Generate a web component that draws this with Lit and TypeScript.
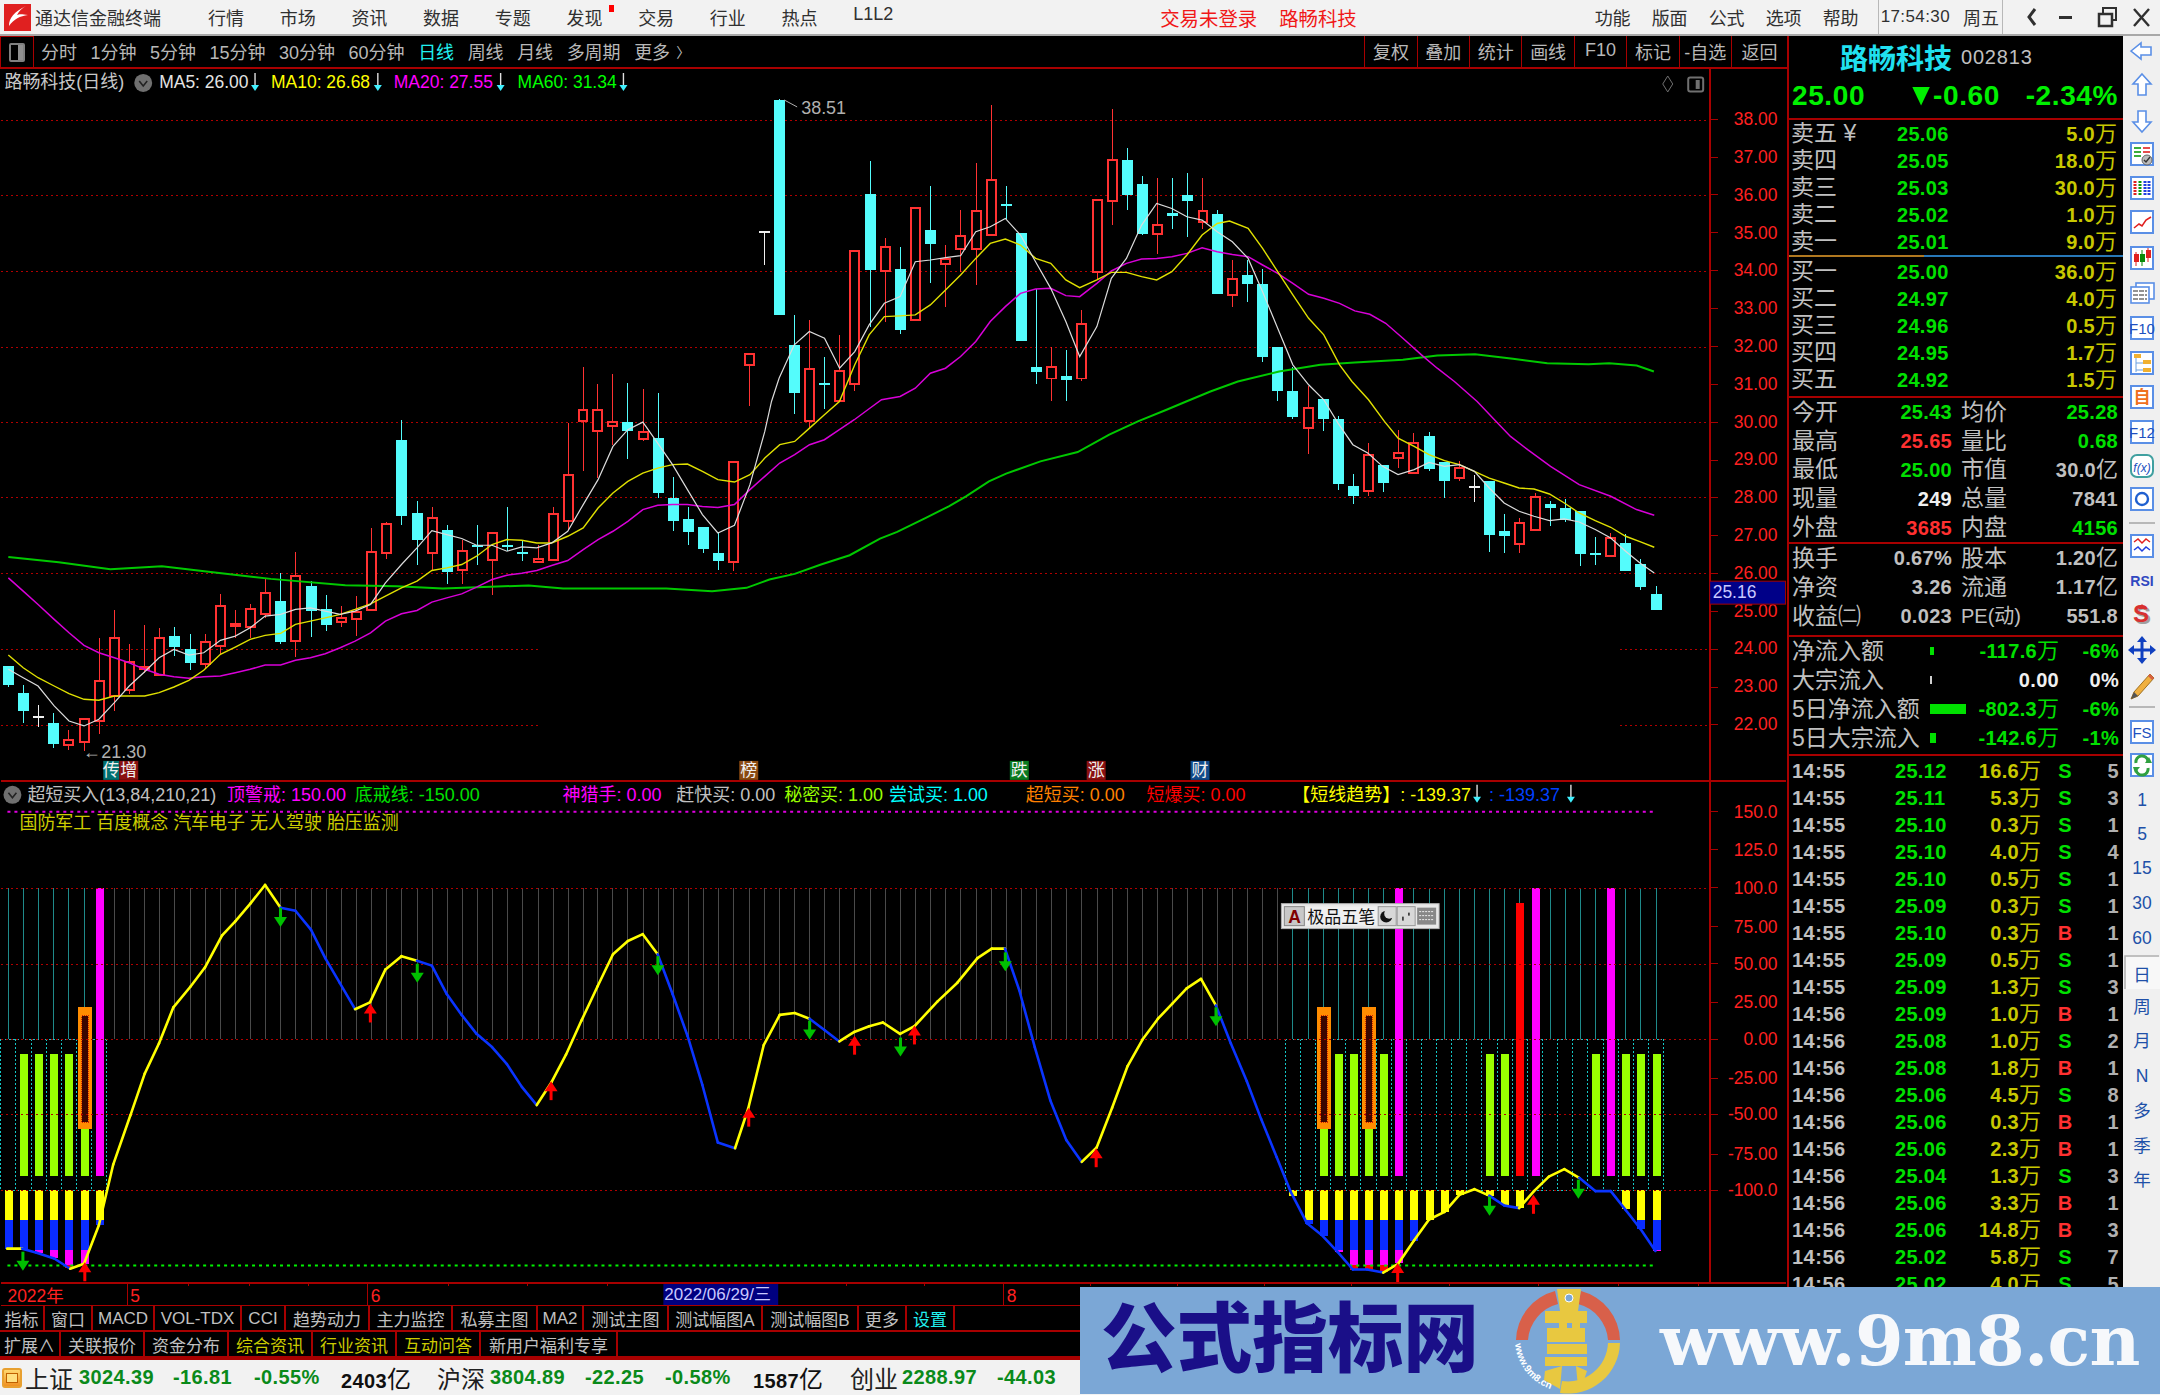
import { LitElement, html, css, svg } from "lit";
import { customElement } from "lit/decorators.js";

type P = [number, number];
const STEP = 15.135, X0 = 6.9;
const cx = (i: number) => X0 + STEP * i;
const z3 = (a: number[]): P[] => pairs(a).map(([x, y]) => [x / 1.742, 400 + y / 3]);
const z4 = (a: number[]): P[] => pairs(a).map(([x, y]) => [880 + x / 1.742, 400 + y / 3]);
const z1 = (a: number[]): P[] => pairs(a).map(([x, y]) => [x / 1.452, y / 3]);
const z2 = (a: number[]): P[] => pairs(a).map(([x, y]) => [1080 + x / 1.452, y / 3]);
const z6 = (a: number[]): P[] => pairs(a).map(([x, y]) => [x / 1.742, 800 + y / 2.635]);
const z7 = (a: number[]): P[] => pairs(a).map(([x, y]) => [880 + x / 1.742, 800 + y / 2.635]);
function pairs(a: number[]): P[] {
  const o: P[] = [];
  for (let i = 0; i < a.length; i += 2) o.push([a[i], a[i + 1]]);
  return o;
}
const pts = (l: P[]) => l.map(([x, y]) => `${x.toFixed(1)},${y.toFixed(1)}`).join(" ");

const MA5 = [
  ...z3([12,805,38,830,64,855,92,915,118,960,144,975,170,955,197,905,223,855,250,812,275,770,301,745,327,762,353,755,382,718,408,705,434,680,460,645,487,640,513,625,539,620,565,630,591,640,617,630,644,610,670,545,698,490,725,440,751,388,777,400,803,412,829,432,856,432,882,450,908,437,934,440,960,425,988,390,1015,310,1041,235,1067,135,1093,85,1119,62,1145,125,1171,190,1197,265,1223,340,1250,395,1279,372,1306,250,1332,90]),
  ...z1([1120,1200,1131,1130,1153,1030,1175,990,1197,1010,1219,1100,1241,1050,1262,970,1284,905,1307,885,1329,780,1351,775,1373,768,1395,762,1417,690,1438,675,1460,650,1482,700,1504,780,1526,860,1548,960]),
  ...z2([0,1065,25,975,46,830,68,770,90,670,112,605,134,620,156,645,178,655,200,690,222,720,245,770,266,870,288,980,310,1090,333,1150,355,1195]),
  ...z4([799,65,825,130,851,155,877,195,904,220,932,205,958,183,985,195,1011,190,1037,210,1063,260,1089,305,1115,330,1141,345,1168,358,1194,353,1220,362,1248,385,1275,410,1301,450,1327,487,1351,515]),
];
const MA10 = [
  ...z3([12,762,38,800,64,830,92,855,118,878,144,895,170,898,197,885,223,885,250,885,275,875,301,858,327,838,353,808,382,760,408,738,434,715,460,703,487,697,513,670,539,660,565,650,591,640,617,625,644,608,670,585,698,560,725,540,751,508,777,500,803,490,829,465,856,430,882,415,908,417,934,425,960,425,988,405,1015,380,1041,320,1067,275,1093,240,1119,215,1145,200,1171,190,1197,188,1223,210,1250,235,1279,242,1306,220,1332,170,1358,130,1384,120,1410,80,1436,40,1462,0]),
  ...z1([1241,1090,1262,1000,1284,945,1307,943,1329,940,1351,910,1373,865,1395,820,1417,770,1438,725,1460,712,1482,730,1504,770,1526,785,1548,835]),
  ...z2([0,858,25,835,46,812,68,812,90,825,112,835,134,810,156,760,178,700,200,665,218,658,245,680,266,740,288,810,310,880,333,950,355,1000,378,1090,396,1140,420,1195]),
  ...z4([880,60,904,110,932,135,958,160,985,178,1011,190,1037,210,1063,230,1089,245,1115,260,1141,263,1168,278,1194,305,1220,335,1248,358,1275,378,1301,405,1327,422,1351,438]),
];
const MA20 = [
  ...z3([12,530,38,570,64,610,92,655,118,695,144,733,170,755,197,770,223,785,250,805,275,820,301,827,327,832,353,827,382,825,408,815,434,805,460,792,487,792,513,778,539,770,565,758,591,740,617,720,644,695,670,660,698,638,725,628,751,603,777,590,803,578,829,558,856,535,882,522,908,516,934,508,960,493,988,478,1015,445,1041,415,1067,390,1093,360,1119,325,1145,312,1171,310,1197,310,1223,316,1250,319,1279,310,1306,265,1332,225,1358,185,1384,160,1410,130,1436,115,1462,85,1488,55,1514,22]),
  ...z1([1280,1195,1307,1185,1329,1160,1351,1115,1373,1100,1395,1065,1417,1020,1438,960,1460,915,1482,875,1504,862,1526,860,1548,882]),
  ...z2([0,885,25,845,46,808,68,785,90,772,112,770,134,765,156,755,178,738,200,750,222,758,245,765,266,790,288,815,310,845,333,878,355,890,378,905,400,928,422,938,445,965,470,1010,497,1060,520,1100,545,1140,578,1200]),
  ...z4([1075,60,1100,105,1130,145,1170,195,1220,250,1275,285,1320,325,1351,342]),
];
const MA60 = [
  ...z3([12,467,100,483,190,504,280,495,380,515,470,533,600,552,690,555,770,562,830,558,920,553,980,562,1160,562,1240,570,1300,560,1340,535,1384,518,1430,490,1480,462]),
  ...z4([0,412,30,392,80,350,120,315,150,285,190,240,220,217,280,180,345,152,400,100,450,60,500,25]),
  ...z2([155,1200,190,1170,230,1140,290,1110,350,1090,400,1083,470,1075,520,1062,575,1058,630,1072,680,1085,740,1088,770,1085,810,1092,835,1110]),
];

type C = [string, number, number, number, number];
const zc = (l: [string, number, number, number, number][]): C[] =>
  l.map(([t, a, b, h, lo]) => [t, 400 + a / 3, 400 + b / 3, 400 + h / 3, 400 + lo / 3]);
const CANDLES: C[] = [
  ...zc([
    ["c",795,853,795,858],["c",875,930,852,965],["w",948,948,912,978],["c",965,1028,935,1042],["r",1016,1031,988,1047],
    ["r",953,1022,953,1050],["r",840,960,710,1000],["r",710,885,628,930],["r",782,866,730,880],["r",797,805,672,815],
    ["r",710,822,682,822],["c",704,737,678,765],["c",745,785,700,808],["r",724,788,700,805],["r",615,735,578,760],
    ["r",670,675,628,710],["r",624,678,610,710],["r",575,640,533,650],["c",601,722,515,728],["r",525,720,452,767],
    ["c",556,630,540,708],["c",624,672,582,690],["r",650,662,615,678],["r",632,653,586,705],["r",453,626,380,630],
    ["r",367,455,362,473],["c",115,343,57,370],["c",335,415,300,490],["r",350,455,318,510],["c",385,513,370,547],
    ["r",450,505,415,547],["x",435,435,370,490],["r",395,477,395,582],["c",430,438,318,450],["x",455,455,415,480],
    ["r",472,482,430,484],["r",337,477,318,477],["r",220,358,65,385],["r",26,60,-105,208],["r",26,90,-51,230],
    ["r",62,75,-84,130],["c",62,90,-54,172],["r",93,112,-36,120],["c",110,275,-24,290],["c",290,360,228,388],
    ["c",353,393,318,430],["c",376,443,376,456],["c",456,478,392,505],["r",183,482,183,510],
  ]),
  ["r",352,363,352,405],["w",230,230,230,263],["c",98,313,97,313],["c",343,392,313,413],["r",367,420,318,428],
  ["x",383,383,355,408],["r",369,400,333,401],["r",249,383,249,390],["c",192,268,159,325],["r",245,269,236,320],
  ["c",267,328,245,332],["r",206,318,206,318],["c",228,242,184,281],["r",257,262,243,305],["r",234,247,208,270],
  ["r",209,247,161,283],["r",178,233,103,233],["x",203,203,184,217],["c",231,339,231,339],["c",365,370,287,383],
  ["r",365,377,345,400],["c",374,379,348,400],["r",322,377,308,380],["r",198,270,198,277],["r",158,199,107,223],
  ["c",158,193,146,208],["c",182,232,174,233],["r",223,232,176,252],["c",211,214,176,227],["c",193,199,171,235],
  ["r",209,220,176,227],["c",212,292,208,292],["r",277,293,258,305],["c",273,282,258,300],["c",282,355,267,360],
  ["c",345,390,345,400],["c",390,416,365,418],["r",407,427,385,453],["c",398,418,398,430],["c",418,483,415,489],
  ["c",485,495,473,503],["r",454,490,442,495],["c",464,482,464,491],["r",452,457,429,467],["r",442,472,432,472],
  ["c",435,468,431,470],["c",461,480,461,497],["r",467,477,460,480],["w",486,486,474,501],["c",480,534,480,551],
  ["c",530,535,513,552],["r",522,543,517,552],["r",496,529,492,529],["c",503,507,500,525],["c",507,519,498,521],
  ["c",510,553,510,565],["x",553,553,536,564],["r",537,555,532,556],["c",542,570,533,570],["c",563,586,558,589],
  ["c",593,609,585,609],
];

const pY = (p: number) => 117.7 + (38 - p) * 37.87;

const curve: P[] = [
  ...z6([10,1182,36,1182,60,1192,92,1208,120,1235,144,1222,170,1120,195,960,225,830,250,720,275,640,300,545,330,490,355,440,385,355,408,318,435,270,460,222,487,282,513,290,540,340,565,415,590,480,617,550,643,532,670,445,698,410,725,422,751,435,777,510,803,565,829,615,856,650,882,695,908,755,934,803,960,742,985,670,1012,580,1040,490,1067,405,1093,370,1119,352,1145,405,1171,510,1197,620,1223,750,1250,902,1280,917,1303,812,1330,645,1358,565,1384,560,1410,575,1436,605,1462,635,1488,610,1514,595]),
  ...z7([5,585,35,615,60,595,100,530,135,480,170,415,195,390,218,390,243,500,270,650,297,790,325,895,352,953,378,915,405,810,432,700,458,630,485,575,510,535,535,495,560,470,586,540,612,640,640,740,665,840,692,940,716,1030,745,1115,770,1145,798,1190,825,1237,850,1237,878,1245,904,1222,932,1160,958,1105,985,1085,1011,1040,1037,1025,1063,1042,1089,1068,1115,1075,1141,1030,1167,992,1194,972,1220,995,1248,1030,1275,1030,1301,1080,1327,1130,1353,1188]),
];
const BLUE: P[] = [[20.7,68.9],[279.6,354.2],[416,536.2],[657.3,734.8],[809.4,839.3],[1005.1,1082],[1216.4,1384],[1490.2,1520],[1580.3,1656.7]];
const isBlue = (x: number) => BLUE.some(([a, b]) => x >= a && x <= b);
const curveAt = (x: number) => {
  for (let i = 0; i < curve.length - 1; i++) {
    const [a, ay] = curve[i], [b, by] = curve[i + 1];
    if (x >= a && x <= b) return ay + ((x - a) / (b - a)) * (by - ay);
  }
  return x < curve[0][0] ? curve[0][1] : curve[curve.length - 1][1];
};

const MAGENTA = [6, 92, 101, 106];
const ORANGE = [5, 87, 90];
const GREEN = [1, 2, 3, 4, 5, 87, 88, 89, 90, 91, 98, 99, 105, 107, 108, 109];
const ACTIVE = (i: number) => i <= 6 || i >= 85;

const ARROWS: [number, number, number, string][] = [
  ...z6([36,1190,486,283,724,430,1145,410,1409,580]).map(([x, y]) => [x, y, y + 18, "d"] as [number, number, number, string]),
  ...z7([35,625,218,400,586,545,1062,1045,1218,1000]).map(([x, y]) => [x, y, y + 18, "d"] as [number, number, number, string]),
  ...z6([144,1268,643,585,958,790,1303,860,1487,670]).map(([x, y]) => [x, y - 18, y, "u"] as [number, number, number, string]),
  ...z7([60,643,377,967,903,1270,1139,1090]).map(([x, y]) => [x, y - 18, y, "u"] as [number, number, number, string]),
];

const PRICE_LABELS = [38,37,36,35,34,33,32,31,30,29,28,27,26,25,24,23,22];
const LOW_LABELS: [string, number][] = [["150.0",811],["125.0",849],["100.0",887],["75.00",926],["50.00",963],["25.00",1002],["0.00",1039],["-25.00",1078],["-50.00",1114],["-75.00",1154],["-100.0",1190]];
const LEGEND: [string, number, string][] = [["MA5: 26.00",158,"#e4e4e4"],["MA10: 26.68",270,"#ffff00"],["MA20: 27.55",393,"#ff00ff"],["MA60: 31.34",517,"#00ff00"]];
const LEGEND_ARROWS = [254, 377, 500, 623];
const IND: [string, number, string][] = [
  ["超短买入(13,84,210,21)",26,"#c0c0c0"],["顶警戒: 150.00",226,"#ff00ff"],["底戒线: -150.00",354,"#00e000"],
  ["神猎手: 0.00",562,"#ff00ff"],["赶快买: 0.00",676,"#c0c0c0"],["秘密买: 1.00",784,"#99ff00"],["尝试买: 1.00",889,"#00ffff"],
  ["超短买: 0.00",1026,"#ff8000"],["短爆买: 0.00",1147,"#ff0000"],["【短线趋势】: -139.37",1293,"#ffff00"],[": -139.37",1490,"#0040ff"],
];
const BADGES: [string, number, number, string][] = [["传",102,16,"#007070"],["增",118,19,"#8a1010"],["榜",739,19,"#8a4a10"],["跌",1010,19,"#0a7a20"],["涨",1087,19,"#8a1010"],["财",1191,19,"#104a8a"]];
const MINOR_TICKS = [187,248,308,448,527,607,846,925,1091,1178,1265,1352,1450,1540,1620,1700];
const MONTH: [string, number][] = [["5",126],["6",367],["8",1004]];

const MENU = ["行情","市场","资讯","数据","专题","发现","交易","行业","热点","L1L2"];
const MENU_R = ["功能","版面","公式","选项","帮助"];
const PERIODS = ["分时","1分钟","5分钟","15分钟","30分钟","60分钟","日线","周线","月线","多周期","更多"];
const TOOLS = ["复权","叠加","统计","画线","F10","标记","-自选","返回"];
const TABS1: [string, number, string?][] = [["指标",45],["窗口",48],["MACD",62],["VOL-TDX",87],["CCI",44],["趋势动力",84],["主力监控",83],["私募主图",85],["MA2",46],["测试主图",85],["测试幅图A",94],["测试幅图B",96],["更多",48],["设置",48,"cy"]];
const TABS2: [string, number, string?][] = [["扩展∧",61],["关联报价",84],["资金分布",84],["综合资讯",84,"ye"],["行业资讯",84,"ye"],["互动问答",84,"ye"],["新用户福利专享",137]];
const SELL = [["卖五 ¥","25.06","5.0"],["卖四","25.05","18.0"],["卖三","25.03","30.0"],["卖二","25.02","1.0"],["卖一","25.01","9.0"]];
const BUY = [["买一","25.00","36.0"],["买二","24.97","4.0"],["买三","24.96","0.5"],["买四","24.95","1.7"],["买五","24.92","1.5"]];
const STATS: [string, string, string, string, string, string, string?][] = [
  ["今开","25.43","gr","均价","25.28","gr"],["最高","25.65","rd","量比","0.68","gr"],["最低","25.00","gr","市值","30.0","wh","亿"],
  ["现量","249","wt","总量","7841","wh"],["外盘","3685","rd","内盘","4156","gr"],
];
const STATS2: [string, string, string, string?][] = [["换手","0.67%","股本","1.20"],["净资","3.26","流通","1.17"],["收益㈡","0.023","PE(动)","551.8"]];
const FLOW: [string, number, number, string, string, string, string][] = [
  ["净流入额",4,8,"-117.6","万","-6%","gr"],["大宗流入",2,8,"0.00","","0%","wt"],["5日净流入额",36,10,"-802.3","万","-6%","gr"],["5日大宗流入",6,10,"-142.6","万","-1%","gr"],
];
const TICKS: [string, string, string, string, string][] = ([
  "14:55 25.12 16.6 S 5","14:55 25.11 5.3 S 3","14:55 25.10 0.3 S 1","14:55 25.10 4.0 S 4","14:55 25.10 0.5 S 1",
  "14:55 25.09 0.3 S 1","14:55 25.10 0.3 B 1","14:55 25.09 0.5 S 1","14:55 25.09 1.3 S 3","14:56 25.09 1.0 B 1",
  "14:56 25.08 1.0 S 2","14:56 25.08 1.8 B 1","14:56 25.06 4.5 S 8","14:56 25.06 0.3 B 1","14:56 25.06 2.3 B 1",
  "14:56 25.04 1.3 S 3","14:56 25.06 3.3 B 1","14:56 25.06 14.8 B 3","14:56 25.02 5.8 S 7","14:56 25.02 4.0 S 5",
].map((s) => s.split(" ") as any));
const STATUS: [string, number, string][] = [
  ["上证",54,"nm"],["3024.39",94,"g"],["-16.81",81,"g"],["-0.55%",87,"g"],["2403|亿",96,"k"],["沪深",53,"nm"],["3804.89",95,"g"],["-22.25",80,"g"],["-0.58%",88,"g"],["1587|亿",97,"k"],["创业",52,"nm"],["2288.97",95,"g"],["-44.03",80,"g"],
];

const downArrow = (x: number, y: number) => svg`
  <line x1=${x} x2=${x} y1=${y - 9} y2=${y + 4} stroke="#e0e0e0" stroke-width="1.4"></line>
  <polygon points="${x - 4},${y + 3} ${x + 4},${y + 3} ${x},${y + 9}" fill="#40f0ff"></polygon>`;

function candlesSvg() {
  return CANDLES.map(([t, top, bot, hi, lo], i) => {
    const x = Math.round(cx(i));
    const col = t === "r" ? "#ff3232" : t === "w" ? "#f0f0f0" : "#54fcfc";
    if (t === "x" || t === "w") {
      return svg`<line x1=${x + 0.5} x2=${x + 0.5} y1=${hi} y2=${lo} stroke=${col}></line>
        <rect x=${x - 5} y=${top - 1} width="11" height="2" fill=${col}></rect>`;
    }
    if (t === "r") {
      return svg`<line x1=${x + 0.5} x2=${x + 0.5} y1=${hi} y2=${top} stroke=${col}></line>
        <line x1=${x + 0.5} x2=${x + 0.5} y1=${bot} y2=${lo} stroke=${col}></line>
        <rect x=${x - 4} y=${top} width="9" height=${Math.max(bot - top, 1)} fill="#000" stroke=${col} stroke-width="2"></rect>`;
    }
    return svg`<line x1=${x + 0.5} x2=${x + 0.5} y1=${hi} y2=${lo} stroke=${col}></line>
      <rect x=${x - 5} y=${top} width="11" height=${Math.max(bot - top, 2)} fill=${col}></rect>`;
  });
}

function lowerSvg() {
  const n = CANDLES.length;
  const out: unknown[] = [];
  for (let i = 0; i < n; i++) {
    const x = Math.round(cx(i)) + 0.5;
    out.push(svg`<line x1=${x} x2=${x} y1="887" y2="1039" stroke=${ACTIVE(i) ? "#1f8a8a" : "#4a4a4a"}></line>`);
  }
  const spans: [number, number][] = [[-1, 6], [84, 109]];
  for (const [a, b] of spans) {
    const xa = cx(a) + 7.5, xb = cx(b) + 7.5;
    for (let i = a; i <= b; i++) {
      const x = Math.round(cx(i) + 7.5) + 0.5;
      out.push(svg`<line x1=${x} x2=${x} y1="1039" y2="1190" stroke="#14c8c8" stroke-dasharray="2 2"></line>`);
    }
    for (const y of [1039.5, 1190.5]) out.push(svg`<line x1=${xa} x2=${xb} y1=${y} y2=${y} stroke="#14c8c8" stroke-dasharray="2 2"></line>`);
  }
  for (let i = 0; i < n; i++) {
    const x = Math.round(cx(i));
    const y = curveAt(cx(i));
    if (y <= 1191) continue;
    const bands: [number, number, string][] = [[1190, 1220, "#ffff00"], [1220, 1250, "#0a2cff"], [1250, 1265, "#ff00ff"], [1265, 1290, "#ff0000"]];
    for (const [a, b, c] of bands) {
      if (y > a) out.push(svg`<rect x=${x - 3} y=${a} width="8" height=${Math.min(y, b) - a} fill=${c}></rect>`);
    }
  }
  for (const i of GREEN) {
    out.push(svg`<rect x=${Math.round(cx(i)) - 3} y="1054" width="8" height="122" fill="#99ff00"></rect>`);
  }
  for (const i of MAGENTA) {
    out.push(svg`<rect x=${Math.round(cx(i)) - 3} y="887" width="8" height="289" fill="#ff00ff"></rect>`);
  }
  out.push(svg`<rect x=${Math.round(cx(100)) - 3} y="902" width="8" height="274" fill="#ff0000"></rect>`);
  for (const i of ORANGE) {
    const x = Math.round(cx(i));
    out.push(svg`<rect x=${x - 6} y="1007" width="14" height="122" fill="#ff8c00"></rect>
      <rect x=${x - 2} y="1016" width="6" height="106" fill="#3a0500"></rect>
      <rect x=${x - 2.5} y="1015.5" width="7" height="107" fill="none" stroke="#d02000" stroke-dasharray="1 1"></rect>`);
  }
  return out;
}

function curveSvg() {
  const out: unknown[] = [];
  for (let i = 0; i < curve.length - 1; i++) {
    const [a, ay] = curve[i], [b, by] = curve[i + 1];
    const blue = isBlue((a + b) / 2);
    out.push(svg`<line x1=${a} y1=${ay} x2=${b} y2=${by} stroke=${blue ? "#0a34ff" : "#ffff00"} stroke-width="2.6" stroke-linecap="round"></line>`);
  }
  for (const [x, y1, y2, d] of ARROWS) {
    const col = d === "d" ? "#00c000" : "#ff0000";
    const rx = Math.round(x);
    if (d === "d") {
      out.push(svg`<rect x=${rx - 1} y=${y1} width="3" height=${y2 - y1 - 6} fill=${col}></rect>
        <polygon points="${rx - 6},${y2 - 9} ${rx + 7},${y2 - 9} ${rx + 0.5},${y2 + 1}" fill=${col}></polygon>`);
    } else {
      out.push(svg`<rect x=${rx - 1} y=${y1 + 6} width="3" height=${y2 - y1 - 6} fill=${col}></rect>
        <polygon points="${rx - 6},${y1 + 9} ${rx + 7},${y1 + 9} ${rx + 0.5},${y1 - 1}" fill=${col}></polygon>`);
    }
  }
  return out;
}

function chartSvg() {
  const gridFull = [38, 36, 34, 32, 30, 28, 26];
  const lowGrid = [887, 962.5, 1039, 1114, 1190];
  return svg`
  <svg class="chart" viewBox="0 67 1787 1239" width="1787" height="1239">
    <g shape-rendering="crispEdges">
      ${gridFull.map((p) => svg`<line x1="0" x2="1711" y1=${Math.round(pY(p)) + 0.5} y2=${Math.round(pY(p)) + 0.5} stroke="#b00000" stroke-dasharray="2 3"></line>`)}
      ${[24, 22].map((p) => svg`
        <line x1="0" x2="538" y1=${Math.round(pY(p)) + 0.5} y2=${Math.round(pY(p)) + 0.5} stroke="#b00000" stroke-dasharray="2 3"></line>
        <line x1="1621" x2="1711" y1=${Math.round(pY(p)) + 0.5} y2=${Math.round(pY(p)) + 0.5} stroke="#b00000" stroke-dasharray="2 3"></line>`)}
      ${candlesSvg()}
    </g>
    <polyline points=${pts(MA60)} fill="none" stroke="#00c800" stroke-width="2"></polyline>
    <polyline points=${pts(MA20)} fill="none" stroke="#d800d8" stroke-width="1.5"></polyline>
    <polyline points=${pts(MA10)} fill="none" stroke="#e0e000" stroke-width="1.4"></polyline>
    <polyline points=${pts(MA5)} fill="none" stroke="#dcdcdc" stroke-width="1.2"></polyline>

    <text class="t s18" x="3" y="86" fill="#c8c8c8">路畅科技(日线)</text>
    <circle cx="142" cy="81" r="9" fill="#707070"></circle>
    <polyline points="138,79 142,84 146,79" fill="none" stroke="#222" stroke-width="1.6"></polyline>
    ${LEGEND.map(([s, x, c]) => svg`<text class="t s175" x=${x} y="86" fill=${c}>${s}</text>`)}
    ${LEGEND_ARROWS.map((x) => downArrow(x, 80))}
    <polygon points="1669,74 1674,82 1669,90 1664,82" fill="none" stroke="#707070"></polygon>
    <rect x="1689.5" y="75.5" width="15" height="14" rx="2" fill="none" stroke="#707070" stroke-width="2"></rect>
    <rect x="1697" y="78" width="4" height="9" fill="#707070"></rect>

    <text class="t s18" x="801" y="112" fill="#b0b0b0">38.51</text>
    <polyline points="784,98 797,105" stroke="#b0b0b0" fill="none"></polyline>
    <text class="t s18" x="82" y="757" fill="#b0b0b0">←21.30</text>
    ${BADGES.map(([s, x, w, c]) => svg`
      <rect x=${x} y="760" width=${w} height="19" fill=${c}></rect>
      <text class="t s17" x=${x + w / 2} y="775" text-anchor="middle" fill="#f0f0f0">${s}</text>`)}

    <g shape-rendering="crispEdges">
      <line x1="0" x2="1787" y1="780" y2="780" stroke="#a80000" stroke-width="2"></line>
      <line x1="1711" x2="1711" y1="67" y2="1282" stroke="#a80000" stroke-width="2"></line>
      ${PRICE_LABELS.map((p) => svg`<line x1="1711" x2="1719" y1=${Math.round(pY(p))} y2=${Math.round(pY(p))} stroke="#a80000"></line>`)}
    </g>
    ${PRICE_LABELS.map((p) => svg`<text class="t s175 ax" x="1779" y=${pY(p) + 5.5} text-anchor="end">${p}.00</text>`)}
    <rect x="1711" y="580" width="76" height="23" fill="#000088" stroke="#a80000"></rect>
    <text class="t s175" x="1714" y="597" fill="#c8c8ff">25.16</text>

    <circle cx="11" cy="794" r="9" fill="#707070"></circle>
    <polyline points="7,792 11,797 15,792" fill="none" stroke="#222" stroke-width="1.6"></polyline>
    ${IND.map(([s, x, c]) => svg`<text class="t s18" x=${x} y="800" fill=${c}>${s}</text>`)}
    ${[1478, 1572].map((x) => downArrow(x, 793))}
    <text class="t s18" x="18" y="828" fill="#cccc00">国防军工 百度概念 汽车电子 无人驾驶 胎压监测</text>
    <line x1="6" x2="1658" y1="811" y2="811" stroke="#e000e0" stroke-width="2" stroke-dasharray="3 4"></line>

    <g shape-rendering="crispEdges">${lowerSvg()}</g>
    ${lowGrid.map((y) => svg`<line x1="0" x2="1711" y1=${Math.round(y) + 0.5} y2=${Math.round(y) + 0.5} stroke="#b00000" stroke-dasharray="2 3" shape-rendering="crispEdges"></line>`)}
    <line x1="6" x2="1656" y1="1265.5" y2="1265.5" stroke="#00f000" stroke-width="2" stroke-dasharray="3 4"></line>
    ${curveSvg()}

    <g shape-rendering="crispEdges">
      ${LOW_LABELS.map(([, y]) => svg`<line x1="1711" x2="1719" y1=${y} y2=${y} stroke="#a80000"></line>`)}
    </g>
    ${LOW_LABELS.map(([s, y]) => svg`<text class="t s175 ax" x="1779" y=${y + 6} text-anchor="end">${s}</text>`)}

    <g shape-rendering="crispEdges">
      <line x1="0" x2="1787" y1="1282.5" y2="1282.5" stroke="#a80000" stroke-width="2"></line>
      ${MINOR_TICKS.map((x) => svg`<line x1=${x} x2=${x} y1="1282" y2="1286" stroke="#a80000"></line>`)}
      ${MONTH.map(([, x]) => svg`<line x1=${x} x2=${x} y1="1282" y2="1306" stroke="#a80000"></line>`)}
      <line x1="0" x2="1787" y1="1305" y2="1305" stroke="#a80000"></line>
    </g>
    <text class="t s175" x="6" y="1302" fill="#ff2020">2022年</text>
    ${MONTH.map(([s, x]) => svg`<text class="t s175" x=${x + 3} y="1302" fill="#ff2020">${s}</text>`)}
    <rect x="663" y="1284" width="115" height="21" fill="#000080"></rect>
    <text class="t s17" x="664" y="1300" fill="#c8c8ff">2022/06/29/三</text>

    <g>
      <rect x="1282" y="903" width="158" height="25" fill="#e8e8e8" stroke="#b0b0b0"></rect>
      <rect x="1285" y="906" width="20" height="19" fill="#c8c8c8" stroke="#888"></rect>
      <text class="t s175" x="1289" y="922" fill="#800000" font-weight="bold">A</text>
      <rect x="1306" y="906" width="72" height="19" fill="#f0f0f0"></rect>
      <text class="t s17" x="1308" y="922" fill="#101010">极品五笔</text>
      <rect x="1379" y="906" width="18" height="19" fill="#d8d8d8" stroke="#999"></rect>
      <circle cx="1387" cy="916" r="6" fill="#111"></circle>
      <circle cx="1390" cy="913" r="5" fill="#d8d8d8"></circle>
      <rect x="1398" y="906" width="18" height="19" fill="#d8d8d8" stroke="#999"></rect>
      <rect x="1403" y="916" width="1.5" height="4" fill="#222"></rect>
      <rect x="1409" y="912" width="1.5" height="3" fill="#222"></rect>
      <rect x="1418" y="907" width="19" height="17" fill="#888"></rect>
      <line x1="1420" x2="1435" y1="911" y2="911" stroke="#eee" stroke-dasharray="2 1"></line>
      <line x1="1420" x2="1435" y1="915" y2="915" stroke="#eee" stroke-dasharray="2 1"></line>
      <line x1="1420" x2="1435" y1="919" y2="919" stroke="#eee" stroke-dasharray="2 1"></line>
    </g>
  </svg>`;
}

function iconsSvg() {
  const FR = "#5a8fe6";
  const frame = (y: number) => svg`<rect x="2131" y=${y - 11} width="22" height="22" fill="#fff" stroke=${FR} stroke-width="2"></rect>`;
  const txt = (y: number, s: string, fill: string, cls = "ic") => svg`<text class="t ${cls}" x="2142" y=${y + 6} text-anchor="middle" fill=${fill}>${s}</text>`;
  const sep = (y: number) => svg`<line x1="2129" x2="2155" y1=${y} y2=${y} stroke="#b8b8b8" stroke-width="2"></line>`;
  return svg`
  <svg class="side" viewBox="2123 36 37 1322" width="37" height="1322">
    <polygon points="2131,51 2141,43 2141,47 2151,47 2151,55 2141,55 2141,59" fill="#fff" stroke=${FR} stroke-width="1.6"></polygon>
    <polygon points="2142,74 2151,84 2146,84 2146,95 2138,95 2138,84 2133,84" fill="#fff" stroke=${FR} stroke-width="1.6"></polygon>
    <polygon points="2142,132 2151,122 2146,122 2146,111 2138,111 2138,122 2133,122" fill="#fff" stroke=${FR} stroke-width="1.6"></polygon>
    ${frame(154)}
    <g stroke-width="1.6">
      <line x1="2134" x2="2141" y1="148" y2="148" stroke="#0a9a0a"></line><line x1="2134" x2="2141" y1="152" y2="152" stroke="#0a9a0a"></line><line x1="2134" x2="2141" y1="156" y2="156" stroke="#0a9a0a"></line>
      <line x1="2143" x2="2150" y1="148" y2="148" stroke="#e02020"></line><line x1="2143" x2="2150" y1="152" y2="152" stroke="#e02020"></line>
    </g>
    <circle cx="2147" cy="160" r="5" fill="#bbb" stroke="#666"></circle><polyline points="2144,160 2146,162 2150,157" fill="none" stroke="#333" stroke-width="1.4"></polyline>
    ${frame(188)}
    ${[[2135,"#e02020"],[2140,"#0a9a0a"],[2145,"#2040e0"],[2149,"#2040e0"]].map(([x, c]) => svg`<line x1=${x} x2=${x} y1="181" y2="196" stroke=${c} stroke-width="3" stroke-dasharray="2 1"></line>`)}
    ${frame(222)}
    <polyline points="2134,228 2139,224 2142,226 2146,220 2151,217" fill="none" stroke="#e02020" stroke-width="1.6"></polyline>
    ${frame(258)}
    <line x1="2136" x2="2136" y1="252" y2="266" stroke="#e02020"></line><rect x="2134" y="254" width="5" height="8" fill="#e02020"></rect>
    <line x1="2142" x2="2142" y1="250" y2="266" stroke="#0a8a0a"></line><rect x="2140" y="254" width="5" height="8" fill="#0a8a0a"></rect>
    <line x1="2148" x2="2148" y1="248" y2="262" stroke="#e02020"></line><rect x="2146" y="250" width="5" height="8" fill="#e02020"></rect>
    <rect x="2136" y="283" width="18" height="16" fill="#fff" stroke=${FR} stroke-width="1.6"></rect>
    <rect x="2131" y="287" width="18" height="16" fill="#fff" stroke=${FR} stroke-width="1.6"></rect>
    <g stroke="#707070" stroke-width="1.6" stroke-dasharray="5 1"><line x1="2133" x2="2147" y1="291" y2="291"></line><line x1="2133" x2="2147" y1="295" y2="295"></line><line x1="2133" x2="2147" y1="299" y2="299"></line></g>
    ${frame(328)} ${txt(328, "F10", "#2050c0", "ic2")}
    ${frame(363)}
    <path d="M2136 358 V372 M2136 363 H2143 M2136 370 H2143" stroke="#6aa0e0" fill="none"></path>
    <rect x="2134" y="354" width="7" height="4" fill="#f0b030"></rect><rect x="2143" y="360" width="8" height="4" fill="#f0b030"></rect><rect x="2143" y="368" width="8" height="4" fill="#f0b030"></rect>
    ${frame(397)} ${txt(397, "自", "#f07020", "ic")}
    ${frame(432)} ${txt(432, "F12", "#2050c0", "ic2")}
    <rect x="2131" y="455" width="22" height="22" rx="6" fill="#fff" stroke="#40a0a0" stroke-width="2"></rect> ${txt(466, "f(x)", "#2050c0", "ic3")}
    ${frame(499)} <circle cx="2142" cy="499" r="6" fill="none" stroke="#2060d0" stroke-width="2.4"></circle>
    ${sep(523)}
    ${frame(546)}
    <polyline points="2134,542 2138,539 2142,543 2146,539 2150,542" fill="none" stroke="#e02020" stroke-width="1.5"></polyline>
    <polyline points="2134,550 2138,547 2142,551 2146,547 2150,550" fill="none" stroke="#2040e0" stroke-width="1.5"></polyline>
    ${txt(580, "RSI", "#3048c0", "ic4")}
    <text class="t ic5" x="2143" y="624" text-anchor="middle" fill="#a0a0a0">S</text>
    <text class="t ic5" x="2141" y="622" text-anchor="middle" fill="#d83030">S</text>
    <polygon points="2142,604 2138,609 2146,609" fill="#d83030"></polygon>
    <g fill="#1040c0">
      <polygon points="2142,636 2137,642 2147,642"></polygon><polygon points="2142,664 2137,658 2147,658"></polygon>
      <polygon points="2128,650 2134,645 2134,655"></polygon><polygon points="2156,650 2150,645 2150,655"></polygon>
      <rect x="2134" y="648.5" width="16" height="3"></rect><rect x="2140.5" y="642" width="3" height="16"></rect>
    </g>
    <path d="M2134 692 L2150 674 L2154 678 L2138 696 L2131 699 Z" fill="#f0b040" stroke="#a07020"></path>
    <polygon points="2150,674 2154,678 2152,680 2148,676" fill="#d86040"></polygon>
    <polygon points="2134,692 2138,696 2131,699" fill="#555"></polygon>
    ${sep(707)}
    ${frame(732)} ${txt(732, "FS", "#2050c0", "ic2")}
    ${frame(765)}
    <path d="M2136 763 A6 6 0 0 1 2148 761 M2148 768 A6 6 0 0 1 2136 770" fill="none" stroke="#30a040" stroke-width="3"></path>
    <polygon points="2145,763 2152,763 2149,757" fill="#30a040"></polygon><polygon points="2133,767 2140,767 2135,773" fill="#30a040"></polygon>

    ${[["1",800],["5",834],["15",868],["30",903],["60",938]].map(([s, y]) => svg`<text class="t s175" x="2142" y=${(y as number) + 6} text-anchor="middle" fill="#2050a8">${s}</text>`)}
    <polyline points="2125,989 2125,956 2159,956" fill="none" stroke="#b0b0b0" stroke-width="1.5"></polyline>
    <rect x="2126" y="957" width="34" height="32" fill="#f8f8f8"></rect>
    ${[["日",975],["周",1007],["月",1041],["N",1076],["多",1111],["季",1146],["年",1180]].map(([s, y]) => svg`<text class="t s175" x="2142" y=${(y as number) + 6} text-anchor="middle" fill="#2050a8">${s}</text>`)}
  </svg>`;
}

function logoSvg() {
  return svg`
  <svg class="logo" viewBox="0 0 110 108" width="110" height="108">
    <path d="M2 53 A52 52 0 0 1 41 4 L44 17 A40 40 0 0 0 14 53 Z" fill="#d8604a"></path>
    <path d="M106 53 A52 52 0 0 0 67 4 L64 17 A40 40 0 0 1 94 53 Z" fill="#d8604a"></path>
    <path d="M106 56 A52 52 0 0 1 46 106 L48 94 A40 40 0 0 0 94 56 Z" fill="#e8c840"></path>
    <g fill="#e8c840">
      <polygon points="43,2 67,2 64,24 46,24"></polygon>
      <rect x="31" y="24" width="42" height="12"></rect>
      <rect x="33" y="41" width="38" height="14"></rect>
      <rect x="45" y="36" width="8" height="6"></rect><rect x="58" y="36" width="8" height="6"></rect>
      <rect x="33" y="57" width="40" height="10"></rect>
      <rect x="31" y="70" width="42" height="9"></rect>
      <polygon points="31,84 48,79 46,102 30,93"></polygon><polygon points="62,79 73,84 70,93 64,100"></polygon>
    </g>
    <circle cx="55" cy="11" r="4" fill="#7ba7d6" stroke="#fff"></circle>
    <defs><path id="wm" d="M1 52 A53 53 0 0 0 50 105"></path></defs>
    <text class="t wmtext" fill="#fff"><textPath href="#wm" startOffset="5">www.9m8.cn</textPath></text>
  </svg>`;
}

@customElement("app-root")
export class AppRoot extends LitElement {
  static styles = css`
    :host {
      display: block;
      width: 2160px;
      height: 1395px;
      position: relative;
      overflow: hidden;
      background: #000;
      font-family: "Liberation Sans", "Noto Sans CJK SC", sans-serif;
      color: #c0c0c0;
    }
    svg { display: block; }
    .t { font-family: "Liberation Sans", "Noto Sans CJK SC", sans-serif; }
    .s17 { font-size: 17px; }
    .s175 { font-size: 17.5px; }
    .s18 { font-size: 18px; }
    .ax { fill: #ff2020; }
    .ic { font-size: 17px; font-weight: bold; }
    .ic2 { font-size: 15px; }
    .ic3 { font-size: 12px; font-style: italic; }
    .ic4 { font-size: 14px; font-weight: bold; }
    .ic5 { font-size: 24px; font-weight: bold; }
    .wmtext { font-size: 10px; font-weight: bold; }

    .titlebar {
      height: 34px;
      background: #f2f2f2;
      border-bottom: 2px solid #a8a8a8;
      display: flex;
      align-items: center;
      font-size: 18px;
      color: #303030;
      white-space: nowrap;
    }
    .logo-app { margin-left: 4px; width: 27px; height: 27px; flex: none; }
    .app-name { margin-left: 4px; width: 173px; }
    .menu { display: flex; gap: 35.7px; }
    .menu span { position: relative; }
    .dot { position: absolute; top: 1px; right: -12px; width: 5px; height: 7px; background: #f00; }
    .alert { margin-left: 267px; color: #f01818; font-size: 19.4px; display: flex; gap: 22px; }
    .menu-r { margin-left: auto; display: flex; gap: 21px; padding-right: 19px; }
    .clock { border-left: 1px solid #b8b8b8; border-right: 1px solid #b8b8b8; height: 34px; display: flex; align-items: center; padding: 0 3px 0 2px; gap: 13px; }
    .clock b { font-weight: normal; letter-spacing: 0.4px; font-size: 17px; }
    .winbtns { width: 157px; flex: none; }

    .main { display: flex; height: 1322px; }
    .left { width: 1787px; flex: none; display: flex; flex-direction: column; }
    .toolbar {
      height: 31px;
      display: flex;
      align-items: center;
      border-bottom: 2px solid #a80000;
      font-size: 18px;
      white-space: nowrap;
      box-sizing: content-box;
      color: #b8b8b8;
    }
    .tb-icon { width: 34px; height: 31px; border: solid #a80000; border-width: 1px 1px 0 1px; box-sizing: border-box; display: flex; align-items: center; justify-content: center; flex: none; }
    .tb-icon i { width: 12px; height: 15px; border: 2px solid #808080; border-radius: 2px; background: linear-gradient(90deg, transparent 55%, #909090 55%); }
    .periods { display: flex; gap: 13.5px; margin-left: 7px; padding-bottom: 2px; }
    .periods .on { color: #20f0f0; }
    .more-chev { margin-left: 6px; font-size: 14px; padding-bottom: 2px; }
    .tools { margin-left: auto; display: flex; height: 31px; }
    .tools span { width: 52.4px; box-sizing: border-box; border-left: 1px solid #a80000; display: flex; align-items: center; justify-content: center; padding-bottom: 2px; }
    .tools span:last-child { width: 56px; }
    .tabrow { height: 26px; display: flex; border-bottom: 2px solid #a80000; box-sizing: border-box; font-size: 17px; white-space: nowrap; }
    .tabrow span { border-right: 2px solid #a80000; display: flex; align-items: center; justify-content: center; box-sizing: border-box; padding-top: 1px; }
    .cy { color: #20f0f0; }
    .ye { color: #cccc00; }

    .quote { width: 336px; flex: none; border-left: 2px solid #a80000; box-sizing: border-box; display: flex; flex-direction: column; overflow: hidden; }
    .head { height: 82px; border-bottom: 2px solid #a80000; flex: none; box-sizing: content-box; }
    .name { height: 42px; display: flex; align-items: center; padding-left: 51px; gap: 9px; }
    .name b { color: #20e0f0; font-size: 28px; }
    .name span { font-size: 20px; color: #c0c0c0; letter-spacing: 0.8px; }
    .last { display: flex; align-items: center; height: 36px; font-size: 28px; font-weight: bold; color: #00f000; padding: 0 5px 2px 3px; letter-spacing: 0.6px; }
    .last .tri { display: block; margin: 0 3px 0 47px; width: 18px; height: 19px; background: #00f000; clip-path: polygon(0 0, 100% 0, 50% 100%); }
    .last .pct { margin-left: auto; }
    .val { font-size: 20px; font-weight: bold; letter-spacing: 0.3px; line-height: 20px; }
    .unit { font-size: 22px; font-weight: normal; letter-spacing: 0; line-height: 0; }
    .ob { flex: none; }
    .ob-row { height: 27px; display: flex; align-items: center; white-space: nowrap; }
    .ob-row .lb { width: 108px; padding-left: 2px; box-sizing: border-box; font-size: 23px; line-height: 27px; }
    .ob-row .pr { width: 54px; color: #00e000; }
    .ob-row .vol { flex: 1; text-align: right; padding-right: 6px; color: #c8c800; }
    .ob-split { height: 2px; flex: none; background: linear-gradient(90deg, #b07820 0 40.5%, #2878b8 40.5%); }
    .ob.buy { padding-top: 1px; height: 138px; border-bottom: 2px solid #a80000; }
    .stats { flex: none; border-bottom: 2px solid #a80000; }
    .st-row { height: 28.8px; display: grid; grid-template-columns: 60px 100px 9px 1fr; padding: 0 5px 0 3px; align-items: center; white-space: nowrap; }
    .st-row .lb { font-size: 23px; line-height: 27px; }
    .st-row .v { text-align: right; }
    .st-row .lb.small { font-size: 20px; }
    .rt { display: flex; justify-content: space-between; align-items: center; }
    .st2 .st-row { height: 29px; }
    .st2 { height: 91px; flex: none; border-bottom: 2px solid #a80000; }
    .gr { color: #00e000; }
    .rd { color: #ff3030; }
    .wt { color: #f0f0f0; }
    .wh { color: #c0c0c0; }
    .flow { height: 117px; flex: none; border-bottom: 2px solid #a80000; }
    .fl-row { height: 29px; display: flex; align-items: center; padding-left: 3px; white-space: nowrap; }
    .fl-row .lb { width: 138px; font-size: 23px; line-height: 27px; flex: none; }
    .fl-row .bar { width: 36px; flex: none; display: flex; align-items: center; }
    .fl-row .bar i { display: block; background: #00e000; }
    .fl-row .bar i.thin { background: #d0d0d0; }
    .fl-row .fv { width: 93px; flex: none; text-align: right; }
    .fl-row .fp { width: 60px; flex: none; text-align: right; }
    .ticks { padding-top: 1.5px; }
    .tk { height: 27px; display: flex; align-items: center; white-space: nowrap; }
    .tk .tm { width: 106px; padding-left: 3px; box-sizing: border-box; color: #c0c0c0; letter-spacing: 0.5px; }
    .tk .pr { width: 53px; color: #00e000; }
    .tk .vl { width: 93px; text-align: right; color: #c8c800; }
    .tk .sd { width: 48px; text-align: center; }
    .tk .ct { width: 30px; text-align: right; color: #b0b0b0; }

    .side { background: #f0f0f0; flex: none; }

    .status { height: 35px; background: #f2f2f2; border-top: 2px solid #a80000; display: flex; align-items: center; white-space: nowrap; box-sizing: content-box; }
    .st-icon { width: 20px; height: 20px; margin: 0 3px 0 2px; flex: none; border-radius: 3px; background: linear-gradient(#ffd870, #f09020); box-sizing: border-box; border: 2px solid #e8a030; display: flex; align-items: center; justify-content: center; }
    .st-icon i { display: block; width: 10px; height: 8px; background: #ffe080; border: 1px solid #c06000; }
    .status span { flex: none; display: block; }
    .status .nm { font-size: 24px; color: #202020; }
    .status .g { font-size: 20px; font-weight: bold; color: #0a8a1a; letter-spacing: 0.4px; }
    .status .k { font-size: 20px; font-weight: bold; color: #101010; letter-spacing: 0.4px; }
    .status .k em { font-style: normal; font-weight: normal; font-size: 24px; letter-spacing: 0; }

    .banner {
      position: absolute;
      left: 1080px;
      top: 1287px;
      width: 1080px;
      height: 107px;
      background: #7ba7d6;
      display: flex;
      align-items: center;
      white-space: nowrap;
      overflow: hidden;
    }
    .bn-t { margin-left: 21px; width: 413px; font-size: 75.6px; line-height: 1; font-weight: 900; color: #1a0f88; letter-spacing: 0; flex: none; }
    .logo { flex: none; }
    .bn-u { margin-left: 36px; font-family: "DejaVu Serif", serif; font-weight: bold; font-size: 70px; line-height: 1; color: #f6f8fb; letter-spacing: -0.8px; }
  `;

  render() {
    const unit = (v: string, u: string) => html`${v}<span class="unit">${u}</span>`;
    return html`
      <div class="titlebar">
        <svg class="logo-app" viewBox="0 0 27 27">
          <rect width="27" height="27" fill="#e02020"></rect>
          <path d="M22 2 C10 8 5 14 5 22 C10 15 16 12 24 11 C18 10 15 10 13 11 C15 7 18 4 22 2 Z" fill="#fff"></path>
        </svg>
        <span class="app-name">通达信金融终端</span>
        <div class="menu">
          ${MENU.map((m) => html`<span>${m}${m === "发现" ? html`<i class="dot"></i>` : ""}</span>`)}
        </div>
        <div class="alert"><span>交易未登录</span><span>路畅科技</span></div>
        <div class="menu-r">${MENU_R.map((m) => html`<span>${m}</span>`)}</div>
        <div class="clock"><b>17:54:30</b><span>周五</span></div>
        <svg class="winbtns" viewBox="0 0 157 34">
          <polyline points="32,9 26,17 32,25" fill="none" stroke="#303030" stroke-width="3"></polyline>
          <rect x="56" y="16" width="13" height="3" fill="#303030"></rect>
          <rect x="96" y="14" width="13" height="12" fill="none" stroke="#303030" stroke-width="2.5"></rect>
          <polyline points="100,13 100,8 113,8 113,20 110,20" fill="none" stroke="#303030" stroke-width="2"></polyline>
          <path d="M131 9 L146 26 M146 9 L131 26" stroke="#303030" stroke-width="2.4"></path>
        </svg>
      </div>

      <div class="main">
        <div class="left">
          <div class="toolbar">
            <div class="tb-icon"><i></i></div>
            <div class="periods">
              ${PERIODS.map((p) => html`<span class=${p === "日线" ? "on" : ""}>${p}</span>`)}
            </div>
            <span class="more-chev">〉</span>
            <div class="tools">${TOOLS.map((t) => html`<span>${t}</span>`)}</div>
          </div>
          ${chartSvg()}
          <div class="tabrow">
            ${TABS1.map(([s, w, c]) => html`<span class=${c ?? ""} style="width:${w}px">${s}</span>`)}
          </div>
          <div class="tabrow">
            ${TABS2.map(([s, w, c]) => html`<span class=${c ?? ""} style="width:${w}px">${s}</span>`)}
          </div>
        </div>

        <div class="quote">
          <div class="head">
            <div class="name"><b>路畅科技</b><span>002813</span></div>
            <div class="last"><span>25.00</span><i class="tri"></i><span>-0.60</span><span class="pct">-2.34%</span></div>
          </div>
          <div class="ob">
            ${SELL.map(([l, p, v]) => html`<div class="ob-row"><span class="lb">${l}</span><span class="pr val">${p}</span><span class="vol val">${unit(v, "万")}</span></div>`)}
          </div>
          <div class="ob-split"></div>
          <div class="ob buy">
            ${BUY.map(([l, p, v]) => html`<div class="ob-row"><span class="lb">${l}</span><span class="pr val">${p}</span><span class="vol val">${unit(v, "万")}</span></div>`)}
          </div>
          <div class="stats">
            ${STATS.map(([a, v, c, b, w, d, u]) => html`<div class="st-row"><span class="lb">${a}</span><span class="v val ${c}">${v}</span><i></i><div class="rt"><span class="lb">${b}</span><span class="v val ${d}">${u ? unit(w, u) : w}</span></div></div>`)}
          </div>
          <div class="st2">
            ${STATS2.map(([a, v, b, w], i) => html`<div class="st-row"><span class="lb">${a}</span><span class="v val wh">${v}</span><i></i><div class="rt"><span class="lb ${i === 2 ? "small" : ""}">${b}</span><span class="v val wh">${i < 2 ? unit(w!, "亿") : w}</span></div></div>`)}
          </div>
          <div class="flow">
            ${FLOW.map(([l, w, h, v, u, p, c]) => html`<div class="fl-row"><span class="lb">${l}</span><span class="bar"><i class=${w < 4 ? "thin" : ""} style="width:${w}px;height:${h}px"></i></span><span class="fv val ${c}">${unit(v, u)}</span><span class="fp val ${c}">${p}</span></div>`)}
          </div>
          <div class="ticks">
            ${TICKS.map(([t, p, v, s, n]) => html`<div class="tk"><span class="tm val">${t}</span><span class="pr val">${p}</span><span class="vl val">${unit(v, "万")}</span><span class="sd val ${s === "S" ? "gr" : "rd"}">${s}</span><span class="ct val">${n}</span></div>`)}
          </div>
        </div>

        ${iconsSvg()}
      </div>

      <div class="status">
        <div class="st-icon"><i></i></div>
        ${STATUS.map(([s, w, c]) => {
          const [a, b] = s.split("|");
          return html`<span class=${c} style="width:${w}px">${a}${b ? html`<em>${b}</em>` : ""}</span>`;
        })}
      </div>

      <div class="banner">
        <div class="bn-t">公式指标网</div>
        ${logoSvg()}
        <div class="bn-u">www.9m8.cn</div>
      </div>
    `;
  }
}
